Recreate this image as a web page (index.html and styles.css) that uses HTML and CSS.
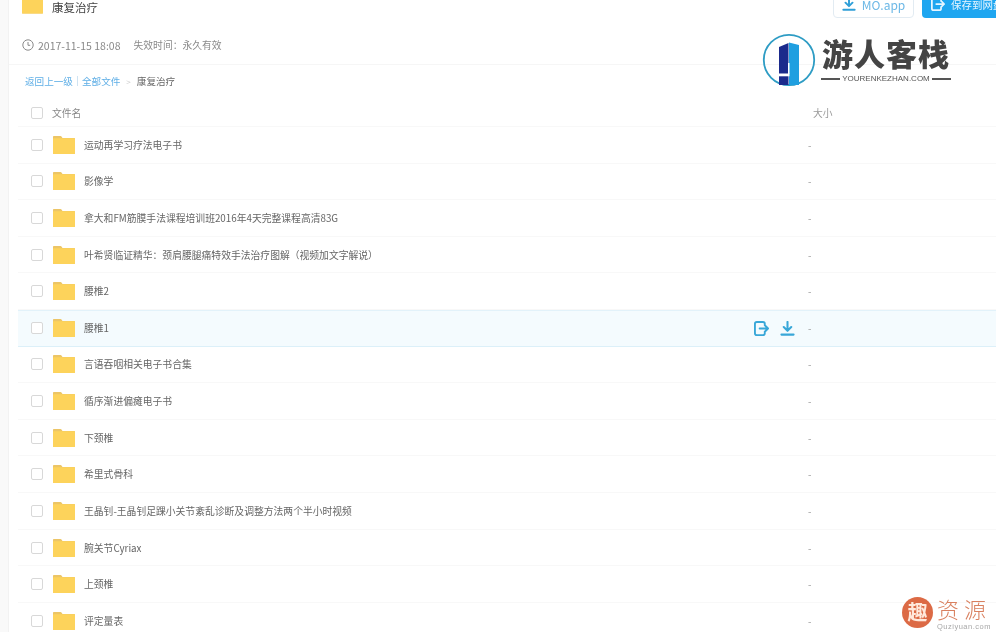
FILE: index.html
```html
<!DOCTYPE html>
<html lang="zh">
<head>
<meta charset="utf-8">
<title>康复治疗</title>
<link rel="stylesheet" href="styles.css">
</head>
<body>
<svg class="defs" width="0" height="0" aria-hidden="true">
  <symbol id="folder" viewBox="0 0 22 18">
    <path d="M0 1C0 .4.400 0 1 0h6.500c.6 0 1 .3 1.300.9L9.500 2H21c.6 0 1 .4 1 1v14c0 .6-.4 1-1 1H1c-.6 0-1-.4-1-1z" fill="#ecc566"/>
    <path d="M0 3.200c0-.6.400-1 1-1h20c.6 0 1 .4 1 1V17c0 .6-.4 1-1 1H1c-.6 0-1-.4-1-1z" fill="#fdd35b"/>
  </symbol>
  <symbol id="save" viewBox="0 0 16 16">
    <path d="M11.500 4.500V3A2 2 0 0 0 9.500 1H3A2 2 0 0 0 1 3v10a2 2 0 0 0 2 2h6.500a2 2 0 0 0 2-2v-1.500M6 8h9M11.500 4.500 15 8l-3.500 3.500" fill="none" stroke="currentColor" stroke-width="2" stroke-linecap="round" stroke-linejoin="round"/>
  </symbol>
  <symbol id="down" viewBox="0 0 16 16">
    <path d="M8 1v9M4 6.500 8 10.500l4-4M1.500 14.500h13" fill="none" stroke="currentColor" stroke-width="2.200" stroke-linecap="round" stroke-linejoin="round"/>
  </symbol>
</svg>

<div class="page">
  <aside class="gutter"></aside>
  <main class="main">
    <header class="head">
      <div class="head-title">
        <svg class="head-folder"><use href="#folder"/></svg>
        <span class="title">康复治疗</span>
      </div>
      <div class="head-actions">
        <span class="btn btn-light"><svg class="btn-ico"><use href="#down"/></svg>MO.app</span>
        <span class="btn btn-blue"><svg class="btn-ico"><use href="#save"/></svg>保存到网盘</span>
      </div>
    </header>
    <div class="meta">
      <svg class="clock" viewBox="0 0 12 12"><circle cx="6" cy="6" r="5.200" fill="none" stroke="currentColor"/><path d="M6 3v3.300h2.200" fill="none" stroke="currentColor"/></svg>
      <span>2017-11-15 18:08</span>
      <span class="expire">失效时间：永久有效</span>
    </div>
    <nav class="crumbs">
      <a>返回上一级</a><i class="sep"></i><a>全部文件</a><span class="gt">&gt;</span><span>康复治疗</span>
    </nav>
    <div class="row row-head">
      <span class="check"></span>
      <span class="name">文件名</span>
      <span class="size">大小</span>
    </div>
    <div class="row"><span class="check"></span><svg class="folder"><use href="#folder"/></svg><span class="name">运动再学习疗法电子书</span><span class="size">-</span></div>
    <div class="row"><span class="check"></span><svg class="folder"><use href="#folder"/></svg><span class="name">影像学</span><span class="size">-</span></div>
    <div class="row"><span class="check"></span><svg class="folder"><use href="#folder"/></svg><span class="name">拿大和FM筋膜手法课程培训班2016年4天完整课程高清83G</span><span class="size">-</span></div>
    <div class="row"><span class="check"></span><svg class="folder"><use href="#folder"/></svg><span class="name">叶希贤临证精华：颈肩腰腿痛特效手法治疗图解（视频加文字解说）</span><span class="size">-</span></div>
    <div class="row"><span class="check"></span><svg class="folder"><use href="#folder"/></svg><span class="name">腰椎2</span><span class="size">-</span></div>
    <div class="row row-active"><span class="check"></span><svg class="folder"><use href="#folder"/></svg><span class="name">腰椎1</span>
      <span class="row-tools"><svg class="tool"><use href="#save"/></svg><svg class="tool"><use href="#down"/></svg></span>
      <span class="size">-</span></div>
    <div class="row"><span class="check"></span><svg class="folder"><use href="#folder"/></svg><span class="name">言语吞咽相关电子书合集</span><span class="size">-</span></div>
    <div class="row"><span class="check"></span><svg class="folder"><use href="#folder"/></svg><span class="name">循序渐进偏瘫电子书</span><span class="size">-</span></div>
    <div class="row"><span class="check"></span><svg class="folder"><use href="#folder"/></svg><span class="name">下颈椎</span><span class="size">-</span></div>
    <div class="row"><span class="check"></span><svg class="folder"><use href="#folder"/></svg><span class="name">希里式骨科</span><span class="size">-</span></div>
    <div class="row"><span class="check"></span><svg class="folder"><use href="#folder"/></svg><span class="name">王晶钊-王晶钊足踝小关节紊乱诊断及调整方法两个半小时视频</span><span class="size">-</span></div>
    <div class="row"><span class="check"></span><svg class="folder"><use href="#folder"/></svg><span class="name">腕关节Cyriax</span><span class="size">-</span></div>
    <div class="row"><span class="check"></span><svg class="folder"><use href="#folder"/></svg><span class="name">上颈椎</span><span class="size">-</span></div>
    <div class="row"><span class="check"></span><svg class="folder"><use href="#folder"/></svg><span class="name">评定量表</span><span class="size">-</span></div>
  </main>
</div>

<div class="brand">
  <svg class="brand-mark" viewBox="0 0 54 54">
    <circle cx="27" cy="27" r="25.200" fill="none" stroke="#2e9cc4" stroke-width="1.800"/>
    <path d="M17 14 26.500 10v42H17z" fill="#1b2a8c"/>
    <path d="M27 9.500 37 12v40H27z" fill="#1f9fe0"/>
    <rect x="17" y="40.500" width="10.500" height="2.800" fill="#fff"/>
    <rect x="26" y="30" width="1.500" height="11" fill="#fff"/>
  </svg>
  <div class="brand-text">
    <div class="brand-name">游人客栈</div>
    <div class="brand-sub"><i></i><span>YOURENKEZHAN.COM</span><i></i></div>
  </div>
</div>

<div class="mark">
  <span class="mark-seal">趣</span>
  <div class="mark-text"><div class="mark-name">资源</div><div class="mark-sub">Quziyuan.com</div></div>
</div>
</body>
</html>
```
FILE: styles.css
```css
* { box-sizing: border-box; }
html, body { margin: 0; height: 632px; overflow: hidden; background: #fff; }
body { font-family: "Noto Sans CJK SC", sans-serif; color: #666; font-size: 9.8px; position: relative; }
.defs { position: absolute; }
.page { display: flex; height: 632px; overflow: hidden; filter: blur(0.35px); }
.gutter { width: 9px; flex: none; background: #f9f9f9; border-right: 1px solid #f2f2f2; }
.main { flex: 1; min-width: 0; }
.head { display: flex; justify-content: space-between; height: 38px; margin-top: -20px; padding-left: 13px; }
.head-title { display: flex; align-items: center; gap: 9px; height: 34px; margin-top: 10px; }
.head-folder { width: 21px; height: 18px; margin-top: -4px; }
.title { font-size: 11.5px; color: #444; }
.head-actions { display: flex; gap: 8px; height: 38px; }
.btn { display: flex; align-items: center; justify-content: center; gap: 6px; height: 38px; border-radius: 4px; font-size: 12px; padding-top: 10px; }
.btn-light { width: 81px; border: 1px solid #e2ebf2; color: #6cb8e6; background: #fff; }
.btn-blue { width: 90px; background: #1fa6f0; color: #e6f5ff; border-radius: 4px 0 0 4px; margin-right: -16px; justify-content: flex-start; padding-left: 9px; font-size: 10.5px; }
.btn-ico { width: 14px; height: 14px; flex: none; }
.btn-light .btn-ico { color: #2f9fd8; }
.meta { display: flex; align-items: center; height: 45px; padding: 6px 0 0 13px; border-bottom: 1px solid #f6f6f6; color: #8a8a8a; font-size: 10.5px; margin-top: 2px; }
.clock { width: 12px; height: 12px; margin-right: 4px; color: #8a8a8a; }
.expire { margin-left: 13px; font-size: 9.8px; }
.crumbs { display: flex; align-items: center; height: 32px; padding-left: 16px; font-size: 9.6px; color: #666; }
.crumbs a { color: #5eaee6; }
.sep { width: 1px; height: 10px; background: #cfe3f2; margin: 0 4px; }
.gt { color: #ccc; margin: 0 6px; font-size: 8px; }
.row { display: flex; align-items: center; height: 36.620px; padding-left: 13px; border-bottom: 1px solid #f8f8f8; position: relative; margin-left: 9px; }
.row-head { height: 30px; padding-top: 2px; }
.row-active { background: #f4fbfe; border-top: 1px solid #e2f2fa; border-bottom: 1px solid #dcf0f9; }
.check { width: 12px; height: 12px; flex: none; border: 1px solid #d8d8d8; border-radius: 2px; background: #fff; margin-right: 10px; }
.row-head .check { margin-right: 9px; }
.folder { width: 22px; height: 18px; flex: none; margin-right: 9px; }
.name { color: #666; white-space: nowrap; }
.size { position: absolute; left: 790px; color: #999; }
.row-head .size { left: 795px; color: #999; }
.row-head .name { color: #888; }
.row-tools { position: absolute; left: 736px; display: flex; gap: 11px; color: #38a7d8; }
.tool { width: 15px; height: 15px; }
.brand { position: absolute; left: 762px; top: 33px; display: flex; gap: 5px; filter: blur(0.35px); }
.brand-mark { width: 54px; height: 54px; }
.brand-text { display: flex; flex-direction: column; align-items: center; width: 130px; margin-top: 2px; }
.brand-name { font-weight: 900; font-size: 31px; line-height: 36px; color: #444; letter-spacing: 1px; white-space: nowrap; }
.brand-sub { display: flex; align-items: center; gap: 2px; font-family: "Liberation Sans", sans-serif; font-size: 8px; color: #555; white-space: nowrap; line-height: 10px; margin-top: 3px; }
.brand-sub i { width: 19px; height: 1.500px; background: #555; }
.mark { position: absolute; left: 902px; top: 596px; display: flex; gap: 4px; filter: blur(0.4px); }
.mark-seal { width: 31px; height: 31px; margin-top: 1px; border-radius: 50%; background: #dc6a45; color: #ffe9dc; font-weight: 700; font-size: 20px; line-height: 30px; text-align: center; }
.mark-text { display: flex; flex-direction: column; gap: 3px; }
.mark-name { font-size: 22px; line-height: 24px; font-weight: 300; color: #d9805f; letter-spacing: 5px; white-space: nowrap; }
.mark-sub { font-family: "Liberation Sans", sans-serif; font-size: 7.5px; color: #a8a8a8; line-height: 8px; letter-spacing: .5px; white-space: nowrap; }
```
